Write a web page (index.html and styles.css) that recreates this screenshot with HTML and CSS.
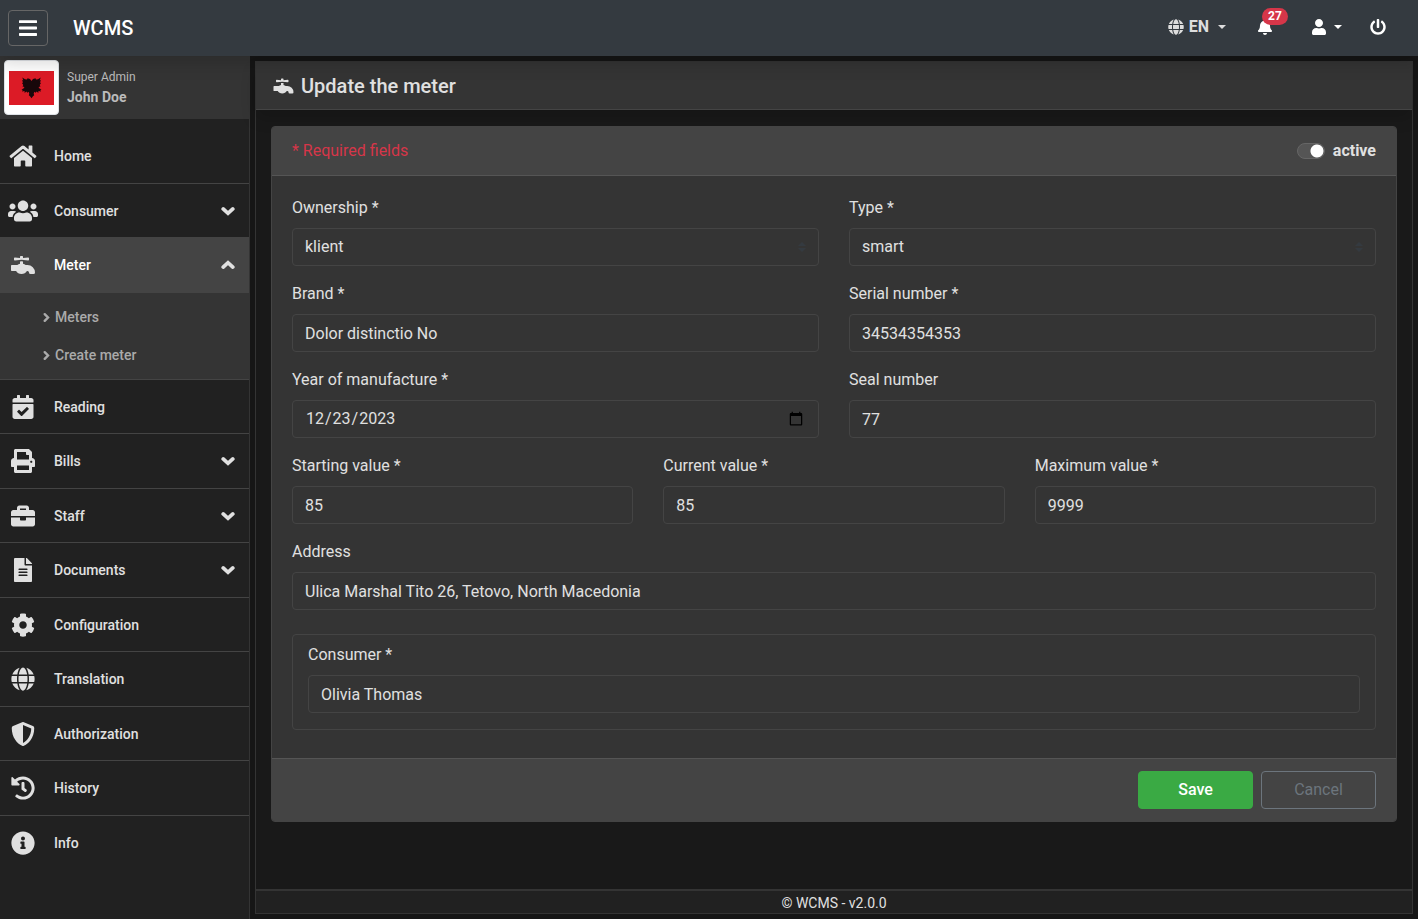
FILE: index.html
```html
<!DOCTYPE html>
<html lang="en">
<head>
<meta charset="utf-8">
<meta name="viewport" content="width=device-width, initial-scale=1">
<title>WCMS</title>
<link rel="stylesheet" href="styles.css">
</head>
<body>
<svg class="sprite" aria-hidden="true">
  <symbol id="bars" viewBox="0 0 448 512"><path d="M16 132h416c8.837 0 16-7.163 16-16V76c0-8.837-7.163-16-16-16H16C7.163 60 0 67.163 0 76v40c0 8.837 7.163 16 16 16zm0 160h416c8.837 0 16-7.163 16-16v-40c0-8.837-7.163-16-16-16H16c-8.837 0-16 7.163-16 16v40c0 8.837 7.163 16 16 16zm0 160h416c8.837 0 16-7.163 16-16v-40c0-8.837-7.163-16-16-16H16c-8.837 0-16 7.163-16 16v40c0 8.837 7.163 16 16 16z"/></symbol>
  <symbol id="home" viewBox="0 0 576 512"><path d="M280.37 148.26L96 300.11V464a16 16 0 0 0 16 16l112.06-.29a16 16 0 0 0 15.92-16V368a16 16 0 0 1 16-16h64a16 16 0 0 1 16 16v95.64a16 16 0 0 0 16 16.05L464 480a16 16 0 0 0 16-16V300L295.67 148.26a12.19 12.19 0 0 0-15.3 0zM571.6 251.47L488 182.56V44.05a12 12 0 0 0-12-12h-56a12 12 0 0 0-12 12v72.61L318.47 43a48 48 0 0 0-61 0L4.34 251.47a12 12 0 0 0-1.6 16.9l25.5 31A12 12 0 0 0 45.15 301l235.22-193.74a12.19 12.19 0 0 1 15.3 0L530.9 301a12 12 0 0 0 16.9-1.6l25.5-31a12 12 0 0 0-1.7-16.93z"/></symbol>
  <symbol id="users" viewBox="0 0 640 512"><path d="M96 224c35.3 0 64-28.7 64-64s-28.7-64-64-64-64 28.7-64 64 28.7 64 64 64zm448 0c35.3 0 64-28.7 64-64s-28.7-64-64-64-64 28.7-64 64 28.7 64 64 64zm32 32h-64c-17.6 0-33.5 7.1-45.1 18.6 40.3 22.1 68.9 62 75.1 109.4h66c17.7 0 32-14.3 32-32v-32c0-35.3-28.7-64-64-64zm-256 0c61.9 0 112-50.1 112-112S381.9 32 320 32 208 82.1 208 144s50.1 112 112 112zm76.8 32h-8.3c-20.8 10-43.9 16-68.5 16s-47.6-6-68.5-16h-8.3C179.6 288 128 339.6 128 403.2V432c0 26.5 21.5 48 48 48h288c26.5 0 48-21.5 48-48v-28.8c0-63.6-51.6-115.2-115.2-115.2zm-223.7-13.4C161.5 263.1 145.6 256 128 256H64c-35.3 0-64 28.7-64 64v32c0 17.7 14.3 32 32 32h65.9c6.3-47.4 34.9-87.3 75.2-109.4z"/></symbol>
  <symbol id="faucet" viewBox="0 0 512 512"><path d="M352,256H313.39c-15.71-13.44-35.46-23.07-57.39-28V180.44l-32-3.38-32,3.38V228c-21.93,5-41.68,14.6-57.39,28H16A16,16,0,0,0,0,272v96a16,16,0,0,0,16,16h92.79C129.38,421.73,173,448,224,448s94.62-26.27,115.21-64H352a32,32,0,0,1,32,32,32,32,0,0,0,32,32h64a32,32,0,0,0,32-32A160,160,0,0,0,352,256ZM81.59,159.91l142.41-15,142.41,15c9.42,1,17.59-6.81,17.59-16.8V112.89c0-10-8.17-17.8-17.59-16.81L256,107.74V80a16,16,0,0,0-16-16H208a16,16,0,0,0-16,16v27.74L81.59,96.08C72.17,95.09,64,102.9,64,112.89v30.22C64,153.1,72.17,160.91,81.59,159.91Z"/></symbol>
  <symbol id="calendar" viewBox="0 0 448 512"><path d="M436 160H12c-6.627 0-12-5.373-12-12v-36c0-26.51 21.49-48 48-48h48V12c0-6.627 5.373-12 12-12h40c6.627 0 12 5.373 12 12v52h128V12c0-6.627 5.373-12 12-12h40c6.627 0 12 5.373 12 12v52h48c26.51 0 48 21.49 48 48v36c0 6.627-5.373 12-12 12zM12 192h424c6.627 0 12 5.373 12 12v260c0 26.51-21.49 48-48 48H48c-26.51 0-48-21.49-48-48V204c0-6.627 5.373-12 12-12zm333.296 95.947l-28.169-28.398c-4.667-4.705-12.265-4.736-16.97-.068L194.12 364.665l-45.98-46.352c-4.667-4.705-12.266-4.736-16.971-.068l-28.397 28.17c-4.705 4.667-4.736 12.265-.068 16.97l82.601 83.269c4.667 4.705 12.265 4.736 16.97.068l142.953-141.805c4.705-4.667 4.736-12.265.068-16.97z"/></symbol>
  <symbol id="print" viewBox="0 0 512 512"><path d="M448 192V77.25c0-8.49-3.37-16.62-9.37-22.63L393.37 9.37c-6-6-14.14-9.37-22.63-9.37H96C78.33 0 64 14.33 64 32v160c-35.35 0-64 28.65-64 64v112c0 8.84 7.16 16 16 16h48v96c0 17.67 14.33 32 32 32h320c17.67 0 32-14.33 32-32v-96h48c8.84 0 16-7.16 16-16V256c0-35.35-28.65-64-64-64zm-64 256H128v-96h256v96zm0-224H128V64h192v48c0 8.84 7.16 16 16 16h48v96zm48 72c-13.25 0-24-10.75-24-24 0-13.26 10.75-24 24-24s24 10.74 24 24c0 13.25-10.75 24-24 24z"/></symbol>
  <symbol id="briefcase" viewBox="0 0 512 512"><path d="M320 336c0 8.84-7.16 16-16 16h-96c-8.84 0-16-7.16-16-16v-48H0v144c0 25.6 22.4 48 48 48h416c25.6 0 48-22.4 48-48V288H320v48zm144-208h-80V80c0-25.6-22.4-48-48-48H176c-25.6 0-48 22.4-48 48v48H48c-25.6 0-48 22.4-48 48v80h512v-80c0-25.6-22.4-48-48-48zm-144 0H192V96h128v32z"/></symbol>
  <symbol id="file" viewBox="0 0 384 512"><path d="M224 136V0H24C10.7 0 0 10.7 0 24v464c0 13.3 10.7 24 24 24h336c13.3 0 24-10.7 24-24V160H248c-13.2 0-24-10.8-24-24zm64 236c0 6.6-5.4 12-12 12H108c-6.6 0-12-5.4-12-12v-8c0-6.6 5.4-12 12-12h168c6.6 0 12 5.4 12 12v8zm0-64c0 6.6-5.4 12-12 12H108c-6.6 0-12-5.4-12-12v-8c0-6.6 5.4-12 12-12h168c6.6 0 12 5.4 12 12v8zm0-72v8c0 6.6-5.4 12-12 12H108c-6.6 0-12-5.4-12-12v-8c0-6.6 5.4-12 12-12h168c6.6 0 12 5.4 12 12zm96-114.1v6.1H256V0h6.1c6.4 0 12.5 2.5 17 7l97.9 98c4.5 4.5 7 10.6 7 16.9z"/></symbol>
  <symbol id="cog" viewBox="0 0 512 512"><path d="M487.4 315.7l-42.6-24.6c4.3-23.2 4.3-47 0-70.2l42.6-24.6c4.9-2.8 7.1-8.6 5.5-14-11.1-35.6-30-67.8-54.7-94.6-3.8-4.1-10-5.1-14.8-2.3L380.8 110c-17.9-15.4-38.5-27.3-60.8-35.1V25.8c0-5.6-3.9-10.5-9.4-11.7-36.7-8.2-74.3-7.8-109.2 0-5.5 1.2-9.4 6.1-9.4 11.7V75c-22.2 7.9-42.8 19.8-60.8 35.1L88.7 85.5c-4.9-2.8-11-1.9-14.8 2.3-24.7 26.7-43.6 58.9-54.7 94.6-1.7 5.4.6 11.2 5.5 14L67.3 221c-4.3 23.2-4.3 47 0 70.2l-42.6 24.6c-4.9 2.8-7.1 8.6-5.5 14 11.1 35.6 30 67.8 54.7 94.6 3.8 4.1 10 5.1 14.8 2.3l42.6-24.6c17.9 15.4 38.5 27.3 60.8 35.1v49.2c0 5.6 3.9 10.5 9.4 11.7 36.7 8.2 74.3 7.8 109.2 0 5.5-1.2 9.4-6.1 9.4-11.7v-49.2c22.2-7.9 42.8-19.8 60.8-35.1l42.6 24.6c4.9 2.8 11 1.9 14.8-2.3 24.7-26.7 43.6-58.9 54.7-94.6 1.5-5.5-.7-11.3-5.6-14.1zM256 336c-44.1 0-80-35.9-80-80s35.9-80 80-80 80 35.9 80 80-35.9 80-80 80z"/></symbol>
  <symbol id="globe" viewBox="0 0 496 512"><path d="M336.5 160C322 70.7 287.8 8 248 8s-74 62.7-88.5 152h177zM152 256c0 22.2 1.2 43.5 3.3 64h185.3c2.1-20.5 3.3-41.8 3.3-64s-1.2-43.5-3.3-64H155.3c-2.1 20.5-3.3 41.8-3.3 64zm324.7-96c-28.6-67.9-86.5-120.4-158-141.6 24.4 33.8 41.2 84.7 50 141.6h108zM177.2 18.4C105.8 39.6 47.8 92.1 19.3 160h108c8.7-56.9 25.5-107.8 49.9-141.6zM487.4 192H372.7c2.1 21 3.3 42.5 3.3 64s-1.2 43-3.3 64h114.6c5.5-20.5 8.6-41.8 8.6-64s-3.1-43.5-8.5-64zM120 256c0-21.5 1.2-43 3.3-64H8.6C3.2 212.5 0 233.8 0 256s3.2 43.5 8.6 64h114.6c-2-21-3.2-42.5-3.2-64zm39.5 96c14.5 89.3 48.7 152 88.5 152s74-62.7 88.5-152h-177zm159.3 141.6c71.4-21.2 129.4-73.7 158-141.6h-108c-8.8 56.9-25.6 107.8-50 141.6zM19.3 352c28.6 67.9 86.5 120.4 158 141.6-24.4-33.8-41.2-84.7-50-141.6h-108z"/></symbol>
  <symbol id="shield" viewBox="0 0 512 512"><path d="M466.5 83.7l-192-80a48.15 48.15 0 0 0-36.9 0l-192 80C27.7 91.1 16 108.6 16 128c0 198.5 114.5 335.7 221.5 380.3 11.8 4.9 25.1 4.9 36.9 0C360.1 472.6 496 349.3 496 128c0-19.4-11.7-36.9-29.5-44.3zM256.1 446.3l-.1-381 175.9 73.3c-3.3 151.4-82.1 261.1-175.8 307.7z"/></symbol>
  <symbol id="history" viewBox="0 0 512 512"><path d="M504 255.531c.253 136.64-111.18 248.372-247.82 248.468-59.015.042-113.223-20.53-155.822-54.911-11.077-8.94-11.905-25.541-1.839-35.607l11.267-11.267c8.609-8.609 22.353-9.551 31.891-1.984C173.062 425.135 212.781 440 256 440c101.705 0 184-82.311 184-184 0-101.705-82.311-184-184-184-48.814 0-93.149 18.969-126.068 49.932l50.754 50.754c10.08 10.08 2.941 27.314-11.313 27.314H24c-8.837 0-16-7.163-16-16V38.627c0-14.254 17.234-21.393 27.314-11.314l49.372 49.372C129.209 34.136 189.552 8 256 8c136.81 0 247.747 110.78 248 247.531zm-180.912 78.784l9.823-12.63c8.138-10.463 6.253-25.542-4.21-33.679L288 256.349V152c0-13.255-10.745-24-24-24h-16c-13.255 0-24 10.745-24 24v135.651l65.409 50.874c10.463 8.137 25.541 6.253 33.679-4.21z"/></symbol>
  <symbol id="info" viewBox="0 0 512 512"><path d="M256 8C119.043 8 8 119.083 8 256c0 136.997 111.043 248 248 248s248-111.003 248-248C504 119.083 392.957 8 256 8zm0 110c23.196 0 42 18.804 42 42s-18.804 42-42 42-42-18.804-42-42 18.804-42 42-42zm56 254c0 6.627-5.373 12-12 12h-88c-6.627 0-12-5.373-12-12v-24c0-6.627 5.373-12 12-12h12v-64h-12c-6.627 0-12-5.373-12-12v-24c0-6.627 5.373-12 12-12h64c6.627 0 12 5.373 12 12v100h12c6.627 0 12 5.373 12 12v24z"/></symbol>
  <symbol id="bell" viewBox="0 0 448 512"><path d="M224 512c35.32 0 63.97-28.65 63.97-64H160.03c0 35.35 28.65 64 63.97 64zm215.39-149.71c-19.32-20.76-55.47-51.99-55.47-154.29 0-77.7-54.48-139.9-127.94-155.16V32c0-17.67-14.32-32-31.98-32s-31.98 14.33-31.98 32v20.84C118.56 68.1 64.08 130.3 64.08 208c0 102.3-36.15 133.53-55.47 154.29-6 6.45-8.66 14.16-8.61 21.71.11 16.4 12.98 32 32.1 32h383.8c19.12 0 32-15.6 32.1-32 .05-7.55-2.61-15.27-8.61-21.71z"/></symbol>
  <symbol id="user" viewBox="0 0 448 512"><path d="M224 256c70.7 0 128-57.3 128-128S294.7 0 224 0 96 57.3 96 128s57.3 128 128 128zm89.6 32h-16.7c-22.2 10.2-46.9 16-72.9 16s-50.6-5.8-72.9-16h-16.7C60.2 288 0 348.2 0 422.4V464c0 26.5 21.5 48 48 48h352c26.5 0 48-21.5 48-48v-41.6c0-74.2-60.2-134.4-134.4-134.4z"/></symbol>
  <symbol id="power" viewBox="0 0 512 512"><path d="M400 54.1c63 45 104 118.6 104 201.9 0 136.8-110.8 247.7-247.5 248C120 504.3 8.2 393 8 256.4 7.9 173.1 48.9 99.3 111.8 54.2c11.7-8.3 28-4.8 35 7.7L162.6 90c5.9 10.5 3.1 23.8-6.6 31-41.5 30.8-68 79.6-68 134.9-.1 92.3 74.5 168.1 168 168.1 91.6 0 168.6-74.2 168-169.1-.3-51.8-24.7-101.8-68.1-134-9.7-7.2-12.4-20.5-6.5-30.9l15.8-28.1c7-12.4 23.2-16.1 34.8-7.8zM296 264V24c0-13.3-10.7-24-24-24h-32c-13.3 0-24 10.7-24 24v240c0 13.3 10.7 24 24 24h32c13.3 0 24-10.7 24-24z"/></symbol>
  <symbol id="down" viewBox="0 0 14 16"><path d="M2.200 5.900L7 10.300l4.800-4.400" fill="none" stroke="currentColor" stroke-width="3.700" stroke-linecap="round"/></symbol>
  <symbol id="right" viewBox="0 0 7 11"><path d="M1.700 2.200L5 5.500 1.700 8.800" fill="none" stroke="currentColor" stroke-width="2.400" stroke-linecap="round"/></symbol>
</svg>

<header class="topbar">
  <button class="menu-toggle" type="button" aria-label="Toggle menu"><svg><use href="#bars"/></svg></button>
  <a class="brand" href="#">WCMS</a>
  <nav class="tools" aria-label="Account">
    <button class="tool tool-lang" type="button"><svg class="icon-sm"><use href="#globe"/></svg><span>EN</span><i class="caret"></i></button>
    <a class="tool tool-bell" href="#" aria-label="Notifications"><svg class="icon-sm"><use href="#bell"/></svg><span class="badge">27</span></a>
    <button class="tool tool-user" type="button" aria-label="Profile"><svg class="icon-sm"><use href="#user"/></svg><i class="caret"></i></button>
    <a class="tool" href="#" aria-label="Log out"><svg class="icon-sm"><use href="#power"/></svg></a>
  </nav>
</header>

<div class="shell">
  <aside class="sidebar">
    <div class="profile">
      <div class="thumb">
        <svg viewBox="0 0 45 34" role="img" aria-label="Flag of Albania">
          <path fill="#dc1b26" d="M0 0h45v34H0z"/>
          <path fill="#18070a" d="M22.500 10l-1.500-2-2.500-.700-.500 1.200-2-.300-2.700-1.700 1 3-1.300-.500 1 2.500-1 .500 1.300 2-.800 1.500 2 .500-1 1.500-2 1 1.200.500-.700 1.500 2.500-.500.200 2 1.600-1.500 1.200 1.200 1.200-1 .600 2-.500 1.500 1.200 1 1.500 2 1.500-2 1.200-1-.500-1.500.600-2 1.200 1 1.200-1.200 1.600 1.500.200-2 2.500.500-.700-1.500 1.200-.500-2-1-1-1.500 2-.500-.800-1.500 1.300-2-1-.500 1-2.500-1.300.500 1-3-2.700 1.700-2 .300-.500-1.200-2.500.700z"/>
        </svg>
      </div>
      <div class="who"><span class="role">Super Admin</span><strong class="name">John Doe</strong></div>
    </div>
    <nav aria-label="Main">
      <ul class="menu">
        <li><a class="item" href="#"><svg class="icon"><use href="#home"/></svg><span>Home</span></a></li>
        <li><a class="item" href="#"><svg class="icon"><use href="#users"/></svg><span>Consumer</span><svg class="chevron"><use href="#down"/></svg></a></li>
        <li>
          <a class="item active" href="#"><svg class="icon"><use href="#faucet"/></svg><span>Meter</span><svg class="chevron up"><use href="#down"/></svg></a>
          <ul class="submenu">
            <li><a href="#"><svg><use href="#right"/></svg><span>Meters</span></a></li>
            <li><a href="#"><svg><use href="#right"/></svg><span>Create meter</span></a></li>
          </ul>
        </li>
        <li><a class="item" href="#"><svg class="icon"><use href="#calendar"/></svg><span>Reading</span></a></li>
        <li><a class="item" href="#"><svg class="icon"><use href="#print"/></svg><span>Bills</span><svg class="chevron"><use href="#down"/></svg></a></li>
        <li><a class="item" href="#"><svg class="icon"><use href="#briefcase"/></svg><span>Staff</span><svg class="chevron"><use href="#down"/></svg></a></li>
        <li><a class="item" href="#"><svg class="icon"><use href="#file"/></svg><span>Documents</span><svg class="chevron"><use href="#down"/></svg></a></li>
        <li><a class="item" href="#"><svg class="icon"><use href="#cog"/></svg><span>Configuration</span></a></li>
        <li><a class="item" href="#"><svg class="icon"><use href="#globe"/></svg><span>Translation</span></a></li>
        <li><a class="item" href="#"><svg class="icon"><use href="#shield"/></svg><span>Authorization</span></a></li>
        <li><a class="item" href="#"><svg class="icon"><use href="#history"/></svg><span>History</span></a></li>
        <li><a class="item last" href="#"><svg class="icon"><use href="#info"/></svg><span>Info</span></a></li>
      </ul>
    </nav>
  </aside>

  <main class="page">
    <h1 class="page-title"><svg><use href="#faucet"/></svg><span>Update the meter</span></h1>
    <div class="page-body">
      <form class="card">
        <div class="card-head">
          <span class="required">* Required fields</span>
          <label class="switch"><input type="checkbox" role="switch" checked><span>active</span></label>
        </div>
        <div class="card-body">
          <div class="row">
            <div class="field"><label for="ownership">Ownership *</label><select id="ownership" class="control"><option>klient</option></select></div>
            <div class="field"><label for="type">Type *</label><select id="type" class="control"><option>smart</option></select></div>
          </div>
          <div class="row">
            <div class="field"><label for="brand">Brand *</label><input id="brand" class="control" type="text" value="Dolor distinctio No"></div>
            <div class="field"><label for="serial">Serial number *</label><input id="serial" class="control" type="text" value="34534354353"></div>
          </div>
          <div class="row">
            <div class="field"><label for="year">Year of manufacture *</label><input id="year" class="control" type="date" value="2023-12-23"></div>
            <div class="field"><label for="seal">Seal number</label><input id="seal" class="control" type="text" value="77"></div>
          </div>
          <div class="row">
            <div class="field"><label for="start">Starting value *</label><input id="start" class="control" type="text" value="85"></div>
            <div class="field"><label for="current">Current value *</label><input id="current" class="control" type="text" value="85"></div>
            <div class="field"><label for="max">Maximum value *</label><input id="max" class="control" type="text" value="9999"></div>
          </div>
          <div class="row">
            <div class="field"><label for="address">Address</label><input id="address" class="control" type="text" value="Ulica Marshal Tito 26, Tetovo, North Macedonia"></div>
          </div>
          <div class="group">
            <div class="field"><label for="consumer">Consumer *</label><input id="consumer" class="control" type="text" value="Olivia Thomas"></div>
          </div>
        </div>
        <div class="card-foot">
          <button class="btn btn-save" type="submit">Save</button>
          <button class="btn btn-cancel" type="button">Cancel</button>
        </div>
      </form>
    </div>
    <footer class="page-foot">© WCMS - v2.0.0</footer>
  </main>
</div>
</body>
</html>
```
FILE: styles.css
```css
* { box-sizing: border-box; }

body {
  margin: 0;
  min-height: 100vh;
  display: flex;
  flex-direction: column;
  background: #161616;
  color: #e0e0e0;
  font: 16px/24px Roboto, "Liberation Sans", sans-serif;
}

svg { fill: currentColor; display: block; flex: none; }
a { color: inherit; text-decoration: none; }
button { font: inherit; color: inherit; }
ul { list-style: none; margin: 0; padding: 0; }
.sprite { display: none; }

/* Top bar */
.topbar {
  position: relative;
  z-index: 1;
  height: 56px;
  padding: 0 24px 0 8px;
  display: flex;
  align-items: center;
  background: #343a40;
  box-shadow: 0 8px 16px rgba(0, 0, 0, .15);
}
.menu-toggle {
  width: 40px;
  height: 36px;
  padding: 0;
  display: grid;
  place-items: center;
  background: none;
  border: 1px solid #666;
  border-radius: 4px;
  color: #fff;
}
.menu-toggle svg { width: 18px; height: 22px; }
.brand { margin-left: 25px; font-size: 20px; font-weight: 500; color: #fff; }
.tools { margin-left: auto; padding-bottom: 2px; display: flex; align-items: center; color: #fff; }
.tool {
  position: relative;
  display: flex;
  align-items: center;
  gap: 7px;
  padding: 8px;
  background: none;
  border: 0;
}
.tool-lang { gap: 5px; margin-right: 15px; color: #ddd; font-weight: 700; }
.tool-lang .caret { margin-left: 4px; }
.tool-bell { margin-right: 22px; }
.tool-user { margin-right: 12px; }
.icon-sm { width: 16px; height: 16px; }
.caret { border: 4px solid transparent; border-top-color: currentColor; border-bottom: 0; }
.badge {
  position: absolute;
  left: 13px;
  top: -3px;
  padding: 0 6px;
  border-radius: 10px;
  background: #d63649;
  color: #fff;
  font-size: 12px;
  line-height: 17px;
  font-weight: 700;
}

.shell { flex: 1; display: flex; }

/* Sidebar */
.sidebar { width: 250px; flex: none; background: #212121; border-right: 1px solid #343434; }
.profile { display: flex; gap: 8px; padding: 4px; background: #343434; }
.thumb {
  width: 55px;
  height: 55px;
  padding: 4px;
  display: grid;
  place-items: center;
  background: #fff;
  border: 1px solid #dee2e6;
  border-radius: 4px;
}
.thumb svg { width: 45px; height: 34px; }
.who { display: flex; flex-direction: column; padding-top: 7px; color: #bbb; line-height: 20px; }
.role { font-size: 12px; }
.name { font-size: 14px; font-weight: 700; }
.menu { padding-top: 10px; font-size: 14px; font-weight: 500; }
.item {
  min-height: 55px;
  padding: 0 14px 0 8px;
  display: flex;
  align-items: center;
  border-bottom: 1px solid #444;
}
.menu > li:nth-child(even) .item { min-height: 54px; }
.item span { margin-left: 16px; }
.item.active { background: #444; color: #fff; }
.item.last { border-bottom: 0; }
.icon { width: 30px; height: 24px; color: #e0e0e0; }
.chevron { width: 14px; height: 16px; margin-left: auto; color: #e0e0e0; }
.chevron.up { transform: rotate(180deg); }
.submenu { padding: 5px 0; background: #343434; color: #aaa; border-bottom: 1px solid #444; }
.submenu a { height: 38px; padding-left: 43px; display: flex; align-items: center; gap: 5px; }
.submenu svg { width: 7px; height: 11px; }

/* Page panel */
.page {
  flex: 1;
  min-width: 0;
  margin: 5px;
  display: flex;
  flex-direction: column;
  background: #191919;
  border: 1px solid #343434;
}
.page-title {
  margin: 0;
  padding: 12px 17px 11px;
  display: flex;
  align-items: center;
  gap: 7px;
  background: #343434;
  border-bottom: 1px solid #444;
  font-size: 20px;
  line-height: 24px;
  font-weight: 500;
  box-shadow: 0 8px 16px rgba(0, 0, 0, .15);
}
.page-title svg { width: 21px; height: 20px; }
.page-body { flex: 1; padding: 16px 15px; }
.page-foot {
  padding: 2px 0 0;
  background: #212121;
  border-top: 2px solid #343434;
  font-size: 14px;
  line-height: 20px;
  text-align: center;
}

/* Form card */
.card { background: #343434; border: 1px solid #444; border-radius: 4px; overflow: hidden; }
.card-head {
  padding: 12px 20px;
  display: flex;
  justify-content: space-between;
  background: #444;
  border-bottom: 1px solid #555;
}
.required { color: #d63649; }
.switch { display: flex; align-items: center; gap: 8px; font-weight: 700; }
.switch input {
  appearance: none;
  width: 28px;
  height: 16px;
  margin: 0;
  border: 1px solid #666;
  border-radius: 8px;
  background: radial-gradient(circle at 19px 7px, #fff 6px, transparent 7px) #555;
}
.card-body { padding: 20px 20px 28px; }
.row { display: flex; gap: 30px; margin-bottom: 16px; }
.field { flex: 1; min-width: 0; display: flex; flex-direction: column; gap: 8px; }
.control {
  width: 100%;
  height: 38px;
  padding: 6px 12px;
  background: transparent;
  border: 1px solid #444;
  border-radius: 4px;
  color: #e0e0e0;
  font: inherit;
}
select.control {
  appearance: none;
  background: url("data:image/svg+xml,%3csvg xmlns='http://www.w3.org/2000/svg' width='4' height='5' viewBox='0 0 4 5'%3e%3cpath fill='%23343a40' d='M2 0L0 2h4zm0 5L0 3h4z'/%3e%3c/svg%3e") right 12px center / 8px 10px no-repeat;
}
.group { margin-top: 24px; padding: 8px 15px 16px; border: 1px solid #444; border-radius: 4px; }
.card-foot {
  padding: 12px 20px;
  display: flex;
  justify-content: flex-end;
  gap: 8px;
  background: #444;
  border-top: 1px solid #555;
}
.btn { width: 115px; height: 38px; border: 1px solid; border-radius: 4px; }
.btn-save { background: #3aaa44; border-color: #3aaa44; color: #fff; font-weight: 500; }
.btn-cancel { background: transparent; border-color: #6c757d; color: #6c757d; }
```
